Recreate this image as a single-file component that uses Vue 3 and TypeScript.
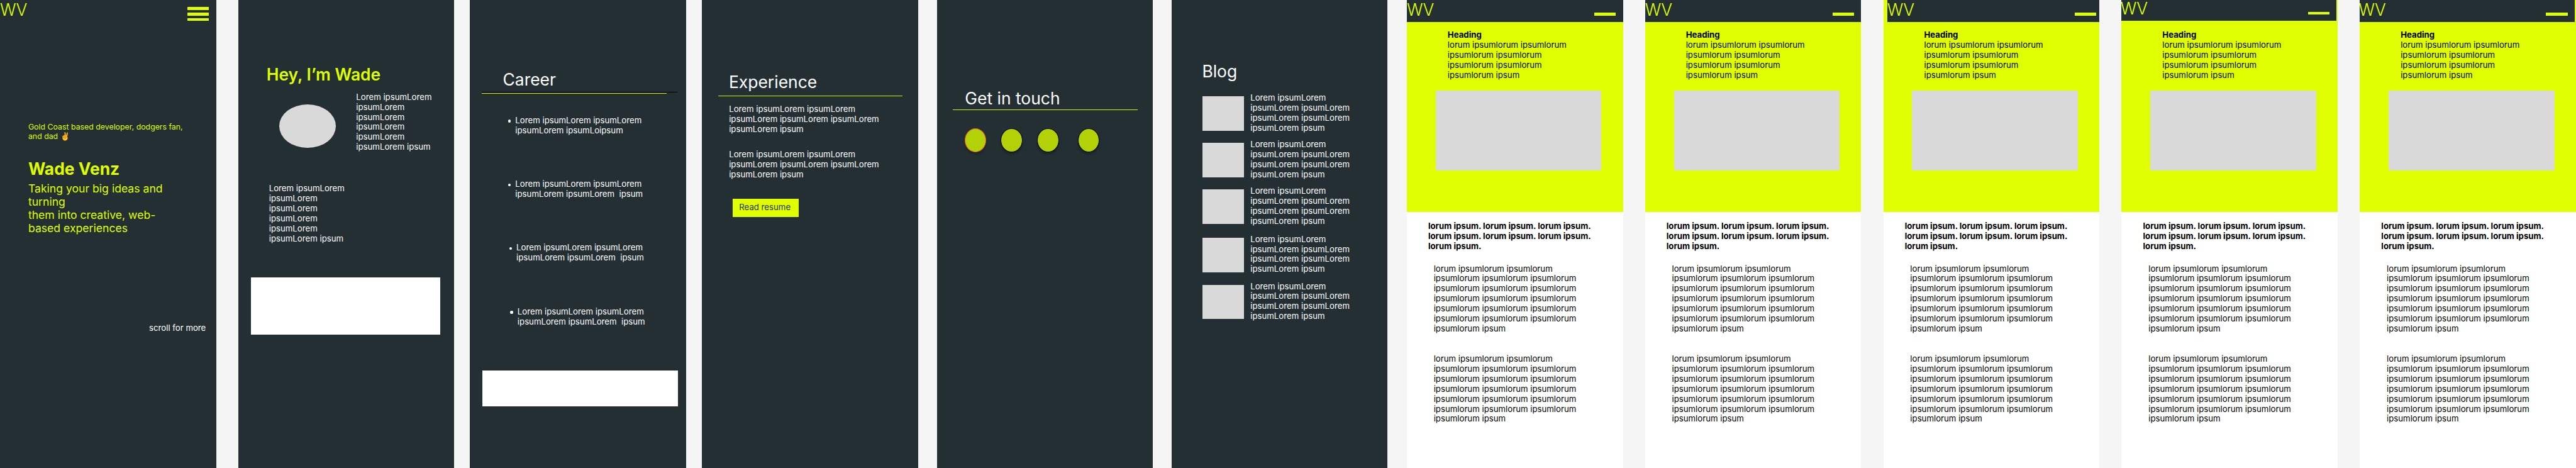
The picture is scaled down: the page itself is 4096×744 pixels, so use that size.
<script setup lang="ts">
interface Article {
  id: string
  shift: string
}

const stackedText = `Lorem ipsumLorem
ipsumLorem
ipsumLorem
ipsumLorem
ipsumLorem
ipsumLorem ipsum`

const careerItems: { text: string; indent: string }[] = [
  { text: 'Lorem ipsumLorem ipsumLorem\nipsumLorem ipsumLoipsum', indent: '' },
  { text: 'Lorem ipsumLorem ipsumLorem\nipsumLorem ipsumLorem  ipsum', indent: '' },
  { text: 'Lorem ipsumLorem ipsumLorem\nipsumLorem ipsumLorem  ipsum', indent: 'indent-1' },
  { text: 'Lorem ipsumLorem ipsumLorem\nipsumLorem ipsumLorem  ipsum', indent: 'indent-2' },
]

const experienceText = `Lorem ipsumLorem ipsumLorem
ipsumLorem ipsumLorem ipsumLorem
ipsumLorem ipsum`

const blogText = `Lorem ipsumLorem
ipsumLorem ipsumLorem
ipsumLorem ipsumLorem
ipsumLorem ipsum`

const leadText = `lorum ipsumlorum ipsumlorum
ipsumlorum ipsumlorum
ipsumlorum ipsumlorum
ipsumlorum ipsum`

const boldText = `lorum ipsum. lorum ipsum. lorum ipsum.
lorum ipsum. lorum ipsum. lorum ipsum.
lorum ipsum.`

const bodyText = [
  'lorum ipsumlorum ipsumlorum',
  ...Array(5).fill('ipsumlorum ipsumlorum ipsumlorum'),
  'ipsumlorum ipsum',
].join('\n')

const articles: Article[] = [
  { id: 'a1', shift: '' },
  { id: 'a2', shift: '' },
  { id: 'a3', shift: 'shift-right' },
  { id: 'a4', shift: 'shift-up' },
  { id: 'a5', shift: 'shift-left' },
]
</script>

<template>
  <main class="board">
    <section class="frame home">
      <header class="bar">
        <span class="logo">WV</span>
        <span class="menu"><i></i><i></i><i></i></span>
      </header>
      <p class="tagline">Gold Coast based developer, dodgers fan,<br />and dad ✌️</p>
      <h1 class="title bold name">Wade Venz</h1>
      <p class="pitch">Taking your big ideas and<br />turning<br />them into creative, web-<br />based experiences</p>
      <p class="text scroll">scroll for more</p>
    </section>

    <section class="frame about">
      <h2 class="title bold">Hey, I’m Wade</h2>
      <div class="intro">
        <div class="portrait"></div>
        <p class="text">{{ stackedText }}</p>
      </div>
      <p class="text more">{{ stackedText }}</p>
      <div class="panel"></div>
    </section>

    <section class="frame career">
      <h2 class="title">Career</h2>
      <div class="rule-dark"></div>
      <div class="rule"></div>
      <ul>
        <li v-for="(item, i) in careerItems" :key="i" :class="item.indent">
          <span class="dot"></span>
          <p class="text">{{ item.text }}</p>
        </li>
      </ul>
      <div class="panel"></div>
    </section>

    <section class="frame experience">
      <h2 class="title">Experience</h2>
      <div class="rule"></div>
      <p class="text">{{ experienceText }}</p>
      <p class="text second">{{ experienceText }}</p>
      <button class="resume" type="button">Read resume</button>
    </section>

    <section class="frame contact">
      <h2 class="title">Get in touch</h2>
      <div class="rule"></div>
      <div class="links"><i class="active"></i><i></i><i></i><i></i></div>
    </section>

    <section class="frame blog">
      <h2 class="title">Blog</h2>
      <div class="posts">
        <article v-for="n in 5" :key="n" class="post">
          <div class="thumb"></div>
          <p class="text">{{ blogText }}</p>
        </article>
      </div>
    </section>

    <section v-for="a in articles" :key="a.id" class="frame article">
      <div class="hero">
        <header class="bar short" :class="a.shift">
          <span class="logo">WV</span>
          <span class="menu"><i></i></span>
        </header>
        <h3 class="text heading">Heading</h3>
        <p class="text lead">{{ leadText }}</p>
        <div class="picture"></div>
      </div>
      <p class="text strong">{{ boldText }}</p>
      <p class="text body">{{ bodyText }}</p>
      <p class="text body last">{{ bodyText }}</p>
    </section>
  </main>
</template>

<style>
html,
body {
  margin: 0;
  background: #f5f5f5;
  overflow: hidden;
}
</style>

<style scoped>
.board {
  --lime: #dfff00;
  --ink: #242f34;
  zoom: 0.88105;
  display: flex;
  width: 4649px;
  height: 845px;
  overflow: hidden;
  background: #f5f5f5;
  font-family: Inter, "Liberation Sans", sans-serif;
}
.board * {
  box-sizing: border-box;
}
p,
h1,
h2,
h3,
ul {
  margin: 0;
  padding: 0;
}

.frame {
  display: flow-root;
  flex: none;
  width: 390px;
  height: 845px;
  overflow: hidden;
  background: var(--ink);
  color: #fff;
}
.about {
  margin-left: 40px;
}
.career {
  margin-left: 28px;
}
.experience {
  margin-left: 29px;
}
.contact {
  margin-left: 34px;
}
.blog {
  margin-left: 33px;
}
.article {
  margin-left: 40px;
  background: #fff;
  color: #000;
}
.blog + .article {
  margin-left: 35px;
}

.text {
  font-size: 15px;
  font-weight: 400;
  line-height: 18px;
  white-space: pre;
}
.title {
  font-size: 30px;
  font-weight: 400;
  line-height: 36px;
  white-space: nowrap;
}
.bold {
  font-weight: 700;
  color: var(--lime);
}
.rule {
  width: 333px;
  height: 1px;
  background: #d0ee03;
}
.panel {
  background: #fff;
}

/* top bar */
.bar {
  display: flex;
  justify-content: space-between;
  width: 390px;
  height: 40px;
  padding-right: 13px;
  background: var(--ink);
}
.logo {
  font-size: 30px;
  font-weight: 300;
  line-height: 36px;
  color: var(--lime);
}
.menu {
  display: flex;
  flex-direction: column;
  gap: 5px;
  padding-top: 13px;
}
.menu i {
  width: 39px;
  height: 5px;
  background: var(--lime);
}
.short .menu {
  padding-top: 23px;
}
.shift-right {
  margin-left: 7px;
}
.shift-left {
  margin-left: -2px;
}
.shift-up {
  margin: -2px 0 0 -2px;
}
.shift-up + .heading {
  margin-top: 16.6px;
}

/* home */
.tagline {
  margin: 180px 0 0 51px;
  font-size: 14px;
  line-height: 17px;
  color: var(--lime);
  white-space: nowrap;
}
.name {
  margin: 33px 0 0 51px;
}
.pitch {
  margin: 5px 0 0 51px;
  font-size: 20px;
  line-height: 24px;
  color: var(--lime);
  white-space: nowrap;
}
.scroll {
  margin: 159px 0 0 269px;
}

/* about */
.about .title {
  margin: 116.7px 0 0 51px;
  font-weight: 600;
}
.intro {
  display: flex;
  margin: 14px 0 0 74px;
}
.portrait {
  width: 102px;
  height: 79px;
  margin: 21.3px 36.8px 0 0;
  border-radius: 50%;
  background: #d9d9d9;
}
.more {
  margin: 57px 0 0 55.5px;
}
.about .panel {
  width: 341px;
  height: 104px;
  margin: 60.3px 0 0 23px;
}

/* career */
.career .title {
  margin: 126px 0 0 59.5px;
}
.rule-dark {
  width: 353px;
  height: 1px;
  margin: 4px 0 0 22px;
  background: #000;
}
.career .rule {
  margin: 1px 0 0 22px;
}
.career ul {
  display: flex;
  flex-direction: column;
  gap: 79px;
  margin: 39.7px 0 0 69px;
  list-style: none;
}
.career li {
  display: flex;
  gap: 8.2px;
}
.dot {
  width: 4.8px;
  height: 4.8px;
  margin-top: 7.5px;
  border-radius: 50%;
  background: #fff;
}
.indent-1 {
  margin-left: 2px;
}
.indent-2 {
  margin-left: 4px;
}
.career .panel {
  width: 353px;
  height: 64px;
  margin: 79.3px 0 0 23px;
}

/* experience */
.experience .title {
  margin: 130.5px 0 0 48.5px;
}
.experience .rule {
  margin: 6.5px 0 0 29px;
}
.experience .text {
  margin: 15px 0 0 48.7px;
}
.experience .second {
  margin-top: 27px;
}
.resume {
  display: block;
  width: 119px;
  height: 33px;
  margin: 35px 0 0 55px;
  padding: 0 0 1.5px 12px;
  border: 0;
  background: var(--lime);
  color: var(--ink);
  font: 400 15px/18px Inter, "Liberation Sans", sans-serif;
  text-align: left;
}

/* contact */
.contact .title {
  margin: 159.5px 0 0 50.5px;
}
.contact .rule {
  margin: 2.5px 0 0 29px;
}
.links {
  display: flex;
  margin: 33px 0 0 50px;
}
.links i {
  width: 39px;
  height: 43px;
  margin-right: 26px;
  border: 1px solid #000;
  border-radius: 50%;
  background: #b3d107;
  box-shadow: 0 4px 4px rgba(0, 0, 0, 0.25);
}
.links .active {
  border-color: #e8572e;
}
.links i:nth-child(2) {
  margin-right: 27px;
}
.links i:nth-child(3) {
  margin-right: 34px;
}

/* blog */
.blog .title {
  margin: 111.5px 0 0 55.5px;
}
.posts {
  display: flex;
  flex-direction: column;
  gap: 12px;
  margin: 20.6px 0 0 56px;
}
.post {
  display: flex;
  gap: 11.7px;
}
.post:nth-child(4) {
  margin-top: 3px;
}
.post:nth-child(5) {
  margin-top: 1px;
}
.thumb {
  width: 75px;
  height: 62px;
  margin-top: 5.9px;
  background: #d9d9d9;
}

/* article */
.hero {
  display: flow-root;
  height: 383px;
  background: var(--lime);
}
.heading {
  margin: 14.6px 0 0 73.6px;
  font-weight: 700;
}
.lead {
  margin-left: 73.6px;
}
.picture {
  width: 299px;
  height: 144px;
  margin: 19.2px 0 0 52px;
  background: #d9d9d9;
}
.strong {
  margin: 16.3px 0 0 38.6px;
  font-weight: 700;
}
.body {
  margin: 23px 0 0 48.5px;
}
.last {
  margin-top: 37px;
}
</style>
